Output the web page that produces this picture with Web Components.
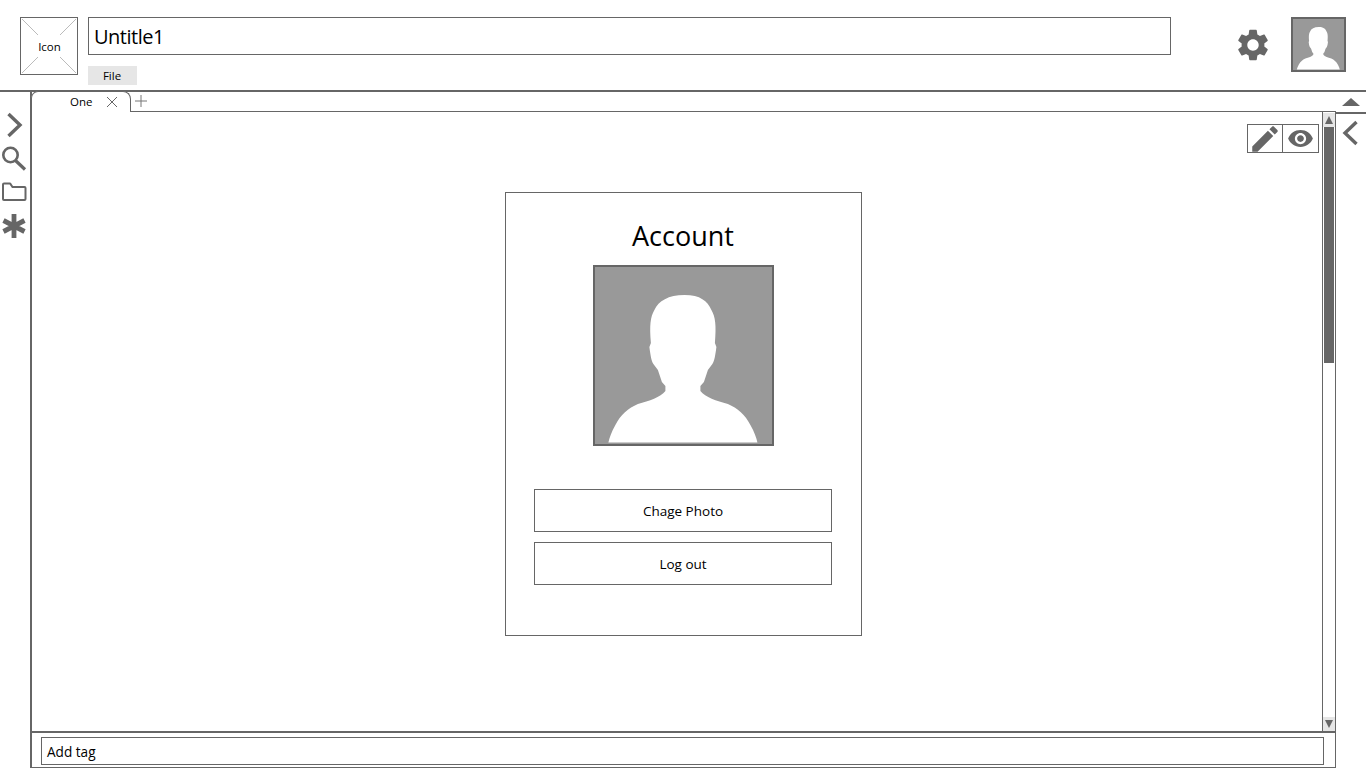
<!DOCTYPE html>
<html>
<head>
<meta charset="utf-8">
<title>Account</title>
<style>
  html, body { margin: 0; height: 100%; background: #fff; overflow: hidden; }
  body { font-family: "Open Sans", "Noto Sans", "Liberation Sans", sans-serif; color: #000; }
</style>
</head>
<body>
<wf-app>
  <wf-header slot="header" doc-title="Untitle1"></wf-header>
  <wf-left-rail slot="left"></wf-left-rail>
  <wf-tab-strip slot="tabs"></wf-tab-strip>
  <wf-canvas slot="canvas">
    <wf-account></wf-account>
  </wf-canvas>
  <wf-tag-bar slot="tags"></wf-tag-bar>
  <wf-right-rail slot="right"></wf-right-rail>
</wf-app>

<script>
const GEAR = 'M19.14 12.94c.04-.3.06-.61.06-.94 0-.32-.02-.64-.07-.94l2.03-1.58c.18-.14.23-.41.12-.61l-1.92-3.32c-.12-.22-.37-.29-.59-.22l-2.39.96c-.5-.38-1.03-.7-1.62-.94l-.36-2.54c-.04-.24-.24-.41-.48-.41h-3.84c-.24 0-.43.17-.47.41l-.36 2.54c-.59.24-1.13.57-1.62.94l-2.39-.96c-.22-.08-.47 0-.59.22L2.74 8.87c-.12.21-.08.47.12.61l2.03 1.58c-.05.3-.09.63-.09.94s.02.64.07.94l-2.03 1.58c-.18.14-.23.41-.12.61l1.92 3.32c.12.22.37.29.59.22l2.39-.96c.5.38 1.03.7 1.62.94l.36 2.54c.05.24.24.41.48.41h3.84c.24 0 .44-.17.47-.41l.36-2.54c.59-.24 1.13-.56 1.62-.94l2.39.96c.22.08.47 0 .59-.22l1.92-3.32c.12-.22.07-.47-.12-.61l-2.01-1.58zM12 15.6c-1.98 0-3.6-1.62-3.6-3.6s1.62-3.6 3.6-3.6 3.6 1.62 3.6 3.6-1.62 3.6-3.6 3.6z'
const PENCIL = 'M3 17.25V21h3.75L17.81 9.94l-3.75-3.75L3 17.25zM20.71 7.04c.39-.39.39-1.02 0-1.41l-2.34-2.34c-.39-.39-1.02-.39-1.41 0l-1.83 1.83 3.75 3.75 1.83-1.83z'
const EYE = 'M12 4.5C7 4.5 2.73 7.61 1 12c1.73 4.39 6 7.5 11 7.5s9.27-3.11 11-7.5c-1.73-4.39-6-7.5-11-7.5zM12 17c-2.76 0-5-2.24-5-5s2.24-5 5-5 5 2.24 5 5-2.24 5-5 5zm0-8c-1.66 0-3 1.34-3 3s1.34 3 3 3 3-1.34 3-3-1.34-3-3-3z'

// every element is just a shadow root filled with a bit of markup
function define(name, html) {
  customElements.define(name, class extends HTMLElement {
    constructor() {
      super()
      this.attachShadow({ mode: 'open' }).innerHTML = html
    }
  })
}

define('wf-app', `
  <style>
    :host { display: grid; width: 1366px; height: 768px; overflow: hidden;
      grid-template: 92px 20px 1fr / 32px 1304px 30px; }
    .header { grid-area: 1 / 1 / 2 / 4; }
    .left { grid-area: 2 / 1 / 4 / 2; }
    .tabs { grid-area: 2 / 2 / 3 / 4; }
    .frame { grid-area: 3 / 2 / 4 / 3; display: flex; flex-direction: column;
      border-right: 1px solid #666; border-bottom: 1px solid #666; min-height: 0; }
    .right { grid-area: 3 / 3 / 4 / 4; }
    .slot-box { display: block; min-width: 0; min-height: 0; }
    .canvas { flex: 1; display: flex; }
    ::slotted(*) { min-width: 0; }
  </style>
  <div class="slot-box header"><slot name="header"></slot></div>
  <div class="slot-box left"><slot name="left"></slot></div>
  <div class="slot-box tabs"><slot name="tabs"></slot></div>
  <div class="frame">
    <div class="canvas"><slot name="canvas"></slot></div>
    <slot name="tags"></slot>
  </div>
  <div class="slot-box right"><slot name="right"></slot></div>
`)

define('wf-avatar', `
  <style>
    :host { display: block; box-sizing: border-box; border: 2px solid #666; background: #999; }
    svg { display: block; width: 100%; height: 100%; }
  </style>
  <svg viewBox="0 0 177 177" preserveAspectRatio="none">
    <path fill="#fff" transform="translate(-.6 0)" d="M90 28 C74 28 64 34 60 43 C56 50 55 58 56.5 76 L55 80 C56 88 57 94 59 97 L63.5 103
      L67.5 115 L71 119 L71 124 C66 130 55 134 43.5 137 C34 141 26 148 21 158 C17 165 15 171 14 175.5
      L163 175.5 C162 171 160 165 156 158 C151 148 143 141 133.5 137 C122 134 111 130 106 124 L106 119
      L109.5 115 L113.5 103 L118 97 C120 94 121 88 122 80 L120.5 76 C122 58 121 50 117 43 C113 34 106 28 90 28 Z"/>
  </svg>
`)

define('wf-header', `
  <style>
    :host { display: flex; box-sizing: border-box; height: 92px; padding: 17px 0 0 20px;
      border-bottom: 2px solid #666; align-items: flex-start; }
    .logo { box-sizing: border-box; display: grid; place-items: center; width: 58px; height: 58px;
      border: 1px solid #666; font-size: 11.5px; }
    .logo > * { grid-area: 1 / 1; }
    .logo svg { width: 56px; height: 56px; }
    .logo span { padding-left: 1px; }
    .col { width: 1083px; margin-left: 10px; }
    .title { box-sizing: border-box; height: 38px; border: 1px solid #666; padding: 0 5px;
      font-size: 20px; letter-spacing: -.5px; line-height: 38px; }
    .file { box-sizing: border-box; width: 49px; height: 19px; margin-top: 11px; padding-right: 1px; background: #e6e6e6;
      font-size: 11.5px; line-height: 19px; text-align: center; }
    .gear { width: 38px; height: 38px; margin: 9px 0 0 63px; fill: #666; }
    wf-avatar { width: 55px; height: 55px; margin-left: 19px; }
  </style>
  <div class="logo">
    <svg viewBox="0 0 56 56" stroke="#bbb" fill="none">
      <path d="M1 1 17 17M55 1 39 17M1 55 17 39M55 55 39 39"/>
    </svg>
    <span>Icon</span>
  </div>
  <div class="col">
    <div class="title">Untitle1</div>
    <div class="file">File</div>
  </div>
  <svg class="gear" viewBox="0 0 24 24"><path d="${GEAR}"/></svg>
  <wf-avatar></wf-avatar>
`)

define('wf-left-rail', `
  <style>
    :host { display: flex; flex-direction: column; box-sizing: border-box; height: 676px; width: 32px;
      padding-top: 16px; border-right: 2px solid #666; }
    svg { display: block; width: 30px; height: 34px; flex: none; fill: none; stroke: #666; }
  </style>
  <svg viewBox="0 0 30 34" stroke-width="3.4"><path d="M8.5 6 20 17 8.5 28"/></svg>
  <svg viewBox="0 0 30 34" stroke-width="2.6"><circle cx="10.500" cy="13" r="7.200"/><path d="M15.500 18.500 25 27.500" stroke-width="3.2"/></svg>
  <svg viewBox="0 0 30 34" stroke-width="2"><path d="M3 8.5V23a1 1 0 0 0 1 1h20.5a1 1 0 0 0 1-1V12a1 1 0 0 0-1-1H12.5L10.500 8a.8.8 0 0 0-.8-.5H4a1 1 0 0 0-1 1Z"/></svg>
  <svg viewBox="0 0 30 34" stroke-width="4.800"><path d="M14 4V28M3.500 10.500 24.500 21.500M24.500 10.500 3.500 21.500"/></svg>
`)

define('wf-tab-strip', `
  <style>
    :host { display: flex; height: 20px; }
    .tabs { flex: none; width: 1304px; box-sizing: border-box; height: 20px; display: flex; border-bottom: 1px solid #666; }
    .tab { box-sizing: border-box; display: flex; align-items: center; width: 100px; height: 21px; margin: -1px 0 0 -1px;
      background: #fff; border: 1px solid #666; border-bottom: 0; border-radius: 7px 8px 0 0; font-size: 11.5px;
      padding: 0 12px 2px 38px; }
    .tab span { flex: 1; }
    .tab svg { width: 12px; height: 12px; margin-top: 2px; stroke: #666; fill: none; }
    .plus { width: 12px; height: 12px; margin: 3px 0 0 4px; stroke: #777; fill: none; }
    .collapse { flex: 1; display: flex; justify-content: center; padding: 6px 1px 0 0; }
    .collapse i { width: 0; height: 0; border: solid transparent; border-width: 0 9px 8px; border-bottom-color: #666; }
  </style>
  <div class="tabs">
    <div class="tab"><span>One</span>
      <svg viewBox="0 0 12 12"><path d="M1 1 11 11M11 1 1 11"/></svg>
    </div>
    <svg class="plus" viewBox="0 0 12 12"><path d="M6 0V12M0 6H12"/></svg>
  </div>
  <div class="collapse"><i></i></div>
`)

define('wf-scrollbar', `
  <style>
    :host { display: flex; flex-direction: column; flex: none; box-sizing: border-box; width: 13px;
      border-left: 1px solid #666; }
    .btn { flex: none; height: 14px; background: #e6e6e6; display: flex; align-items: center; justify-content: center; }
    .up { margin-top: 1px; }
    .btn i { width: 0; height: 0; border: solid transparent; border-width: 0 4.500px 8px; border-bottom-color: #666; }
    .down i { border-width: 8px 4.500px 0; border-color: #666 transparent transparent; }
    .track { flex: 1; padding: 0 1px; }
    .thumb { height: 236px; background: #666; }
  </style>
  <div class="btn up"><i></i></div>
  <div class="track"><div class="thumb"></div></div>
  <div class="btn down"><i></i></div>
`)

define('wf-canvas', `
  <style>
    :host { display: flex; flex: 1; min-width: 0; }
    .area { flex: 1; display: flex; justify-content: center; align-items: flex-start; position: relative;
      padding: 80px 0 0 13px; }
    .tools { position: absolute; top: 12px; right: 3px; display: flex; box-sizing: border-box; height: 29px;
      border: 1px solid #666; }
    .tools svg { display: block; fill: #666; }
    .tools div { display: flex; align-items: center; justify-content: center; }
    .edit { width: 34px; border-right: 1px solid #666; }
    .view { width: 35px; }
  </style>
  <div class="area">
    <slot></slot>
    <div class="tools">
      <div class="edit"><svg width="34" height="34" viewBox="0 0 24 24"><path d="${PENCIL}"/></svg></div>
      <div class="view"><svg width="27" height="27" viewBox="0 0 24 24"><path d="${EYE}"/></svg></div>
    </div>
  </div>
  <wf-scrollbar></wf-scrollbar>
`)

define('wf-button', `
  <style>
    :host { display: block; box-sizing: border-box; width: 298px; height: 43px; border: 1px solid #666;
      font-size: 13.5px; line-height: 42px; text-align: center; }
  </style>
  <slot></slot>
`)

define('wf-account', `
  <style>
    :host { display: flex; flex-direction: column; align-items: center; box-sizing: border-box; width: 357px; height: 444px;
      padding: 25px 29px 0 28px; border: 1px solid #666; }
    h1 { margin: 0 0 11px; font-size: 27px; font-weight: 400; line-height: 36px; }
    wf-avatar { width: 181px; height: 181px; margin: 0 0 43px 1px; flex: none; }
    wf-button + wf-button { margin-top: 10px; }
  </style>
  <h1>Account</h1>
  <wf-avatar></wf-avatar>
  <wf-button>Chage Photo</wf-button>
  <wf-button>Log out</wf-button>
`)

define('wf-tag-bar', `
  <style>
    :host { display: block; box-sizing: border-box; height: 36px; padding: 4px 11px 2px 9px; border-top: 2px solid #666; }
    .input { box-sizing: border-box; height: 28px; border: 1px solid #666; padding-left: 5px; font-size: 13.6px; line-height: 28px; }
  </style>
  <div class="input">Add tag</div>
`)

define('wf-right-rail', `
  <style>
    :host { display: block; box-sizing: border-box; height: 100%; border-top: 2px solid #666; }
    svg { display: block; width: 30px; height: 40px; fill: none; stroke: #666; stroke-width: 3.4; }
  </style>
  <svg viewBox="0 0 30 40"><path d="M20.500 8 9 19 20.500 30"/></svg>
`)
</script>
</body>
</html>
